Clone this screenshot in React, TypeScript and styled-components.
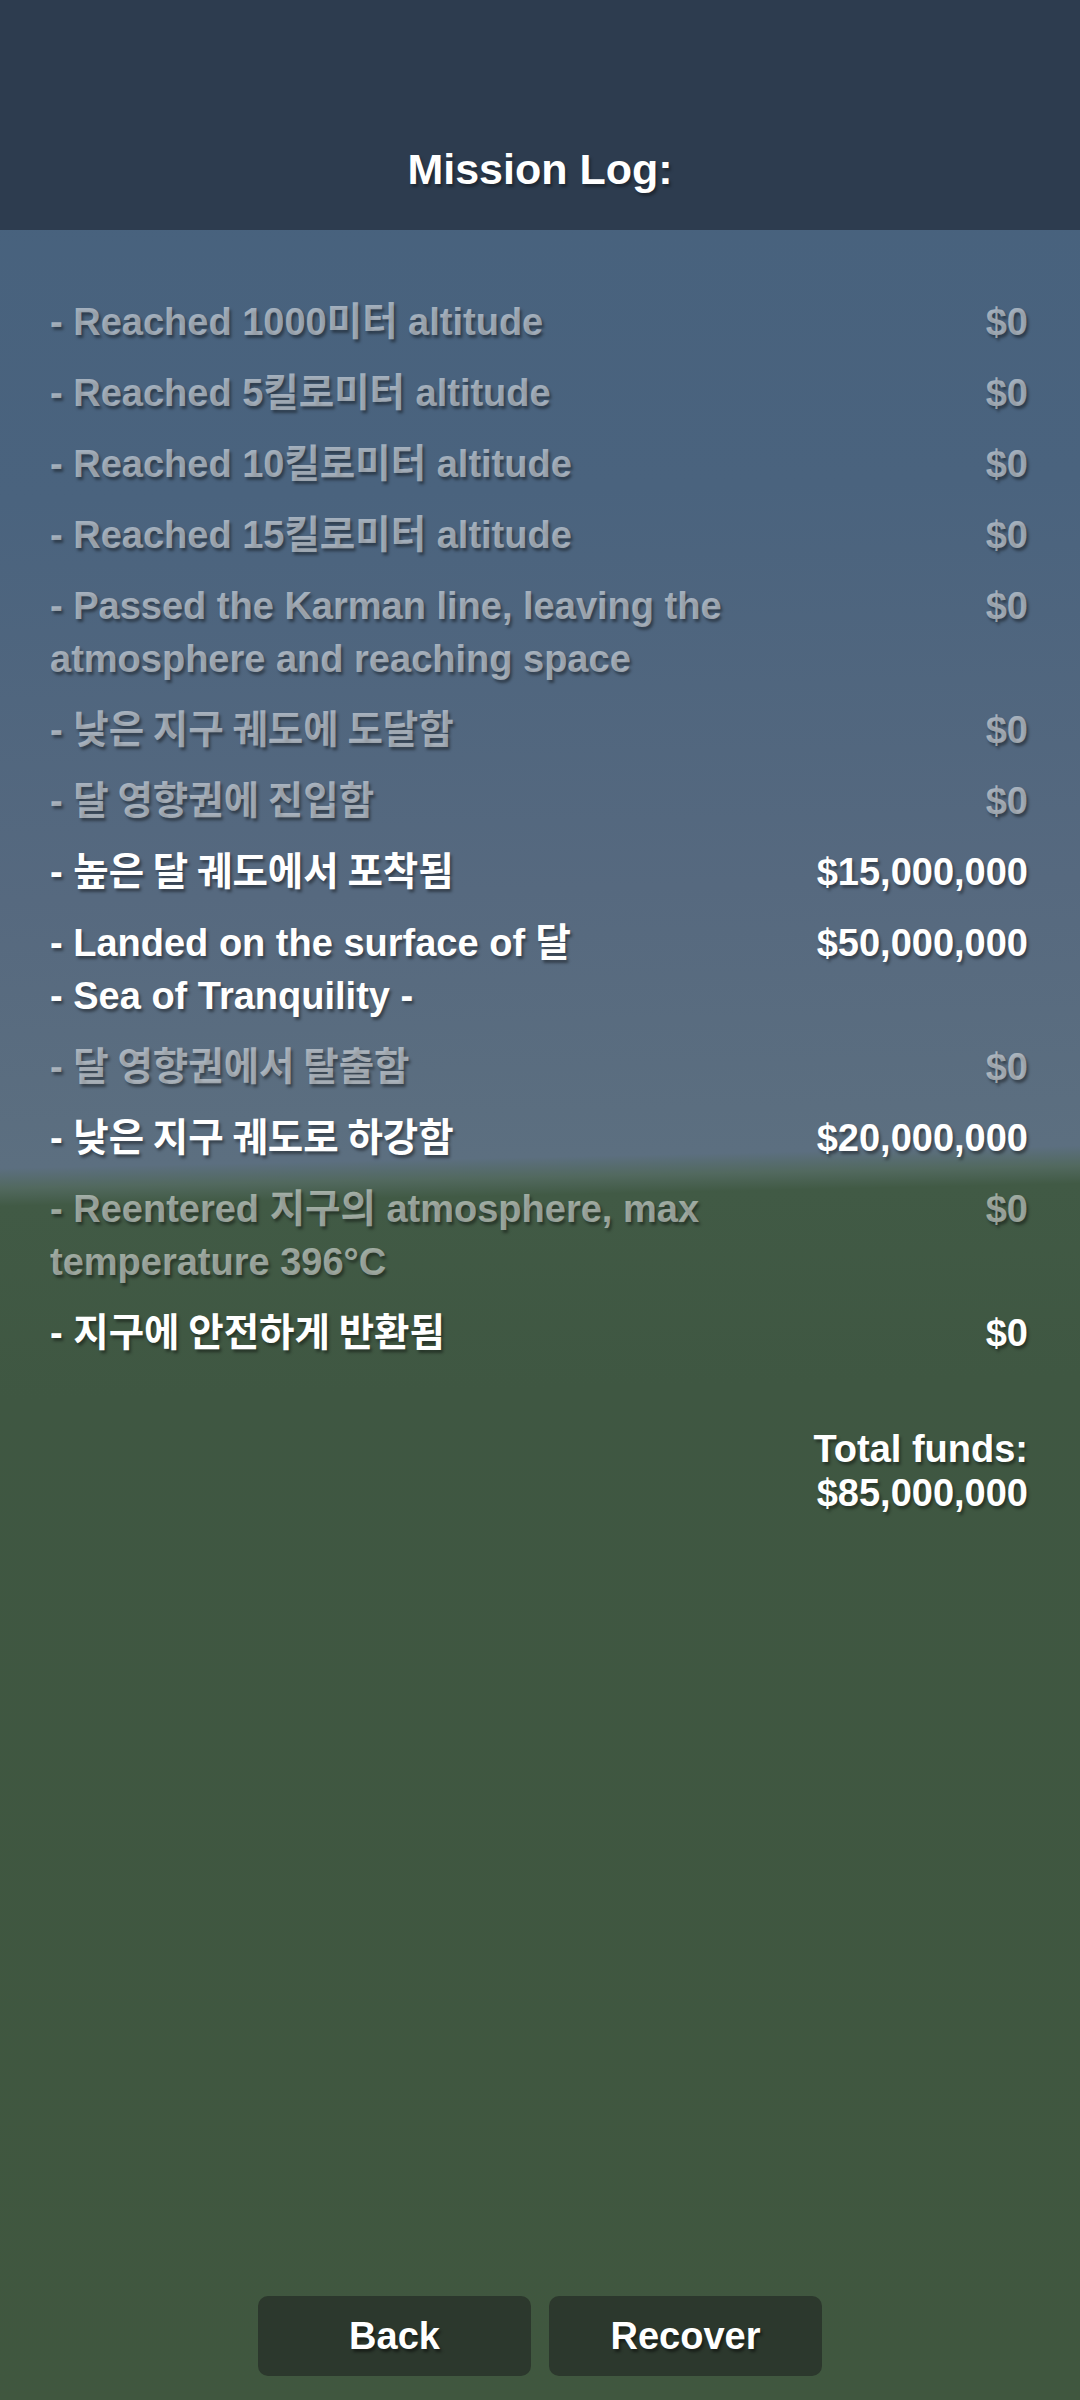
import React from "react";
import styled, { createGlobalStyle } from "styled-components";

const GlobalStyle = createGlobalStyle`
  html, body {
    margin: 0;
    padding: 0;
  }
  body {
    background: #3f5742;
    font-family: "Liberation Sans", Arial, "Noto Sans CJK KR", sans-serif;
  }
`;

const Screen = styled.div`
  width: 1080px;
  min-height: 2400px;
  display: flex;
  flex-direction: column;
  box-sizing: border-box;
  background: linear-gradient(
    178.8deg,
    #46617d 0px,
    #4a637e 500px,
    #56697f 900px,
    #5c6f80 1168px,
    #52695f 1188px,
    #415a45 1206px,
    #3f5742 1400px,
    #40573f 2400px
  );
  color: #ffffff;
  font-weight: 700;
`;

const Header = styled.header`
  height: 230px;
  box-sizing: border-box;
  background: #2d3c4f;
  display: flex;
  align-items: flex-end;
  justify-content: center;
  padding-bottom: 36px;
`;

const Title = styled.h1`
  margin: 0;
  font-size: 43px;
  line-height: 50px;
  font-weight: 700;
  color: #ffffff;
  text-shadow: 2px 3px 3px rgba(0, 0, 0, 0.35);
`;

const LogList = styled.ul`
  list-style: none;
  margin: 0;
  padding: 66px 52px 0 50px;
  display: flex;
  flex-direction: column;
  gap: 17.4px;
`;

const Row = styled.li<{ $dim?: boolean }>`
  display: grid;
  grid-template-columns: minmax(0, 1fr) 220px;
  column-gap: 40px;
  font-size: 38px;
  line-height: 53.5px;
  color: ${(p) => (p.$dim ? "rgba(255, 255, 255, 0.5)" : "#ffffff")};
  text-shadow: 2px 3px 3px rgba(0, 0, 0, 0.4);
`;

const Label = styled.span`
  display: block;
`;

const Amount = styled.span`
  white-space: nowrap;
  text-align: right;
`;

const Ko = styled.span`
  font-family: "Noto Sans CJK KR", sans-serif;
  font-weight: 700;
  font-size: 38.5px;
  line-height: 1;
`;

const Total = styled.div`
  margin-top: 66px;
  padding-right: 52px;
  align-self: flex-end;
  text-align: right;
  font-size: 38px;
  line-height: 44px;
  text-shadow: 2px 3px 3px rgba(0, 0, 0, 0.4);
`;

const Footer = styled.footer`
  margin-top: auto;
  display: flex;
  justify-content: center;
  gap: 18px;
  padding-bottom: 24px;
`;

const Button = styled.button`
  width: 273px;
  height: 80px;
  border: none;
  border-radius: 10px;
  background: #2c382d;
  color: #ffffff;
  font-family: "Liberation Sans", Arial, sans-serif;
  font-weight: 700;
  font-size: 38px;
  text-shadow: 2px 3px 3px rgba(0, 0, 0, 0.45);
  cursor: pointer;
`;

function renderText(text: string) {
  const parts = text.split(/([\uAC00-\uD7A3]+(?:\s+[\uAC00-\uD7A3]+)*)/);
  return parts.map((part, i) =>
    /[\uAC00-\uD7A3]/.test(part) ? <Ko key={i}>{part}</Ko> : <React.Fragment key={i}>{part}</React.Fragment>
  );
}

type Entry = { lines: string[]; amount: string; dim: boolean };

const entries: Entry[] = [
  { lines: ["- Reached 1000미터 altitude"], amount: "$0", dim: true },
  { lines: ["- Reached 5킬로미터 altitude"], amount: "$0", dim: true },
  { lines: ["- Reached 10킬로미터 altitude"], amount: "$0", dim: true },
  { lines: ["- Reached 15킬로미터 altitude"], amount: "$0", dim: true },
  {
    lines: ["- Passed the Karman line, leaving the atmosphere and reaching space"],
    amount: "$0",
    dim: true,
  },
  { lines: ["- 낮은 지구 궤도에 도달함"], amount: "$0", dim: true },
  { lines: ["- 달 영향권에 진입함"], amount: "$0", dim: true },
  { lines: ["- 높은 달 궤도에서 포착됨"], amount: "$15,000,000", dim: false },
  {
    lines: ["- Landed on the surface of 달", "- Sea of Tranquility -"],
    amount: "$50,000,000",
    dim: false,
  },
  { lines: ["- 달 영향권에서 탈출함"], amount: "$0", dim: true },
  { lines: ["- 낮은 지구 궤도로 하강함"], amount: "$20,000,000", dim: false },
  {
    lines: ["- Reentered 지구의 atmosphere, max temperature 396°C"],
    amount: "$0",
    dim: true,
  },
  { lines: ["- 지구에 안전하게 반환됨"], amount: "$0", dim: false },
];

export default function App() {
  return (
    <>
      <GlobalStyle />
      <Screen>
        <Header>
          <Title>Mission Log:</Title>
        </Header>
        <LogList>
          {entries.map((e, i) => (
            <Row key={i} $dim={e.dim}>
              <Label>
                {e.lines.map((line, j) => (
                  <React.Fragment key={j}>
                    {j > 0 && <br />}
                    {renderText(line)}
                  </React.Fragment>
                ))}
              </Label>
              <Amount>{e.amount}</Amount>
            </Row>
          ))}
        </LogList>
        <Total>
          Total funds:
          <br />
          $85,000,000
        </Total>
        <Footer>
          <Button>Back</Button>
          <Button>Recover</Button>
        </Footer>
      </Screen>
    </>
  );
}
